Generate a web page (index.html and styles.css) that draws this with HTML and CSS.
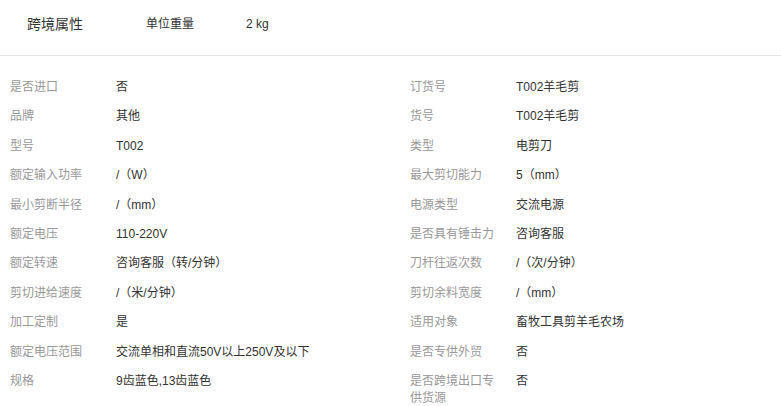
FILE: index.html
```html
<!DOCTYPE html>
<html lang="zh-CN">
<head>
  <meta charset="UTF-8" />
  <meta name="viewport" content="width=device-width, initial-scale=1.0"/>
  <title>商品属性</title>
  <link rel="stylesheet" href="styles.css">
</head>
<body>
  <div class="header">
    <span class="title">跨境属性</span>
    <span class="attr-name">单位重量</span>
    <span class="attr-value">2 kg</span>
  </div>

  <div class="attrs">
    <div class="item"><span class="label">是否进口</span><span class="value">否</span></div>
    <div class="item"><span class="label">订货号</span><span class="value">T002羊毛剪</span></div>
    <div class="item"><span class="label">品牌</span><span class="value">其他</span></div>
    <div class="item"><span class="label">货号</span><span class="value">T002羊毛剪</span></div>
    <div class="item"><span class="label">型号</span><span class="value">T002</span></div>
    <div class="item"><span class="label">类型</span><span class="value">电剪刀</span></div>
    <div class="item"><span class="label">额定输入功率</span><span class="value">/（W）</span></div>
    <div class="item"><span class="label">最大剪切能力</span><span class="value">5（mm）</span></div>
    <div class="item"><span class="label">最小剪断半径</span><span class="value">/（mm）</span></div>
    <div class="item"><span class="label">电源类型</span><span class="value">交流电源</span></div>
    <div class="item"><span class="label">额定电压</span><span class="value">110-220V</span></div>
    <div class="item"><span class="label">是否具有锤击力</span><span class="value">咨询客服</span></div>
    <div class="item"><span class="label">额定转速</span><span class="value">咨询客服（转/分钟）</span></div>
    <div class="item"><span class="label">刀杆往返次数</span><span class="value">/（次/分钟）</span></div>
    <div class="item"><span class="label">剪切进给速度</span><span class="value">/（米/分钟）</span></div>
    <div class="item"><span class="label">剪切余料宽度</span><span class="value">/（mm）</span></div>
    <div class="item"><span class="label">加工定制</span><span class="value">是</span></div>
    <div class="item"><span class="label">适用对象</span><span class="value">畜牧工具剪羊毛农场</span></div>
    <div class="item"><span class="label">额定电压范围</span><span class="value">交流单相和直流50V以上250V及以下</span></div>
    <div class="item"><span class="label">是否专供外贸</span><span class="value">否</span></div>
    <div class="item"><span class="label">规格</span><span class="value">9齿蓝色,13齿蓝色</span></div>
    <div class="item"><span class="label">是否跨境出口专供货源</span><span class="value">否</span></div>
  </div>
</body>
</html>
```

FILE: styles.css
```css
body {
  margin: 0;
  font-family: "Liberation Sans", "Noto Sans CJK SC", sans-serif;
  font-size: 12px;
  color: #333;
  background: #fff;
}

.header {
  display: flex;
  align-items: center;
  height: 56px;
  padding: 0 0 8px 27px;
  box-sizing: border-box;
  border-bottom: 1px solid #e6e6e6;
  line-height: 20px;
}

.header .title {
  font-size: 14px;
  width: 119px;
}

.header .attr-name {
  width: 100px;
}

.attrs {
  display: grid;
  grid-template-columns: 400px 1fr;
  padding-top: 17px;
}

.item {
  display: flex;
  align-items: flex-start;
  padding: 6px 0 6px 10px;
  line-height: 17.4px;
}

.label {
  width: 90px;
  margin-right: 16px;
  flex-shrink: 0;
  color: #999;
}

.value {
  color: #333;
}
```
